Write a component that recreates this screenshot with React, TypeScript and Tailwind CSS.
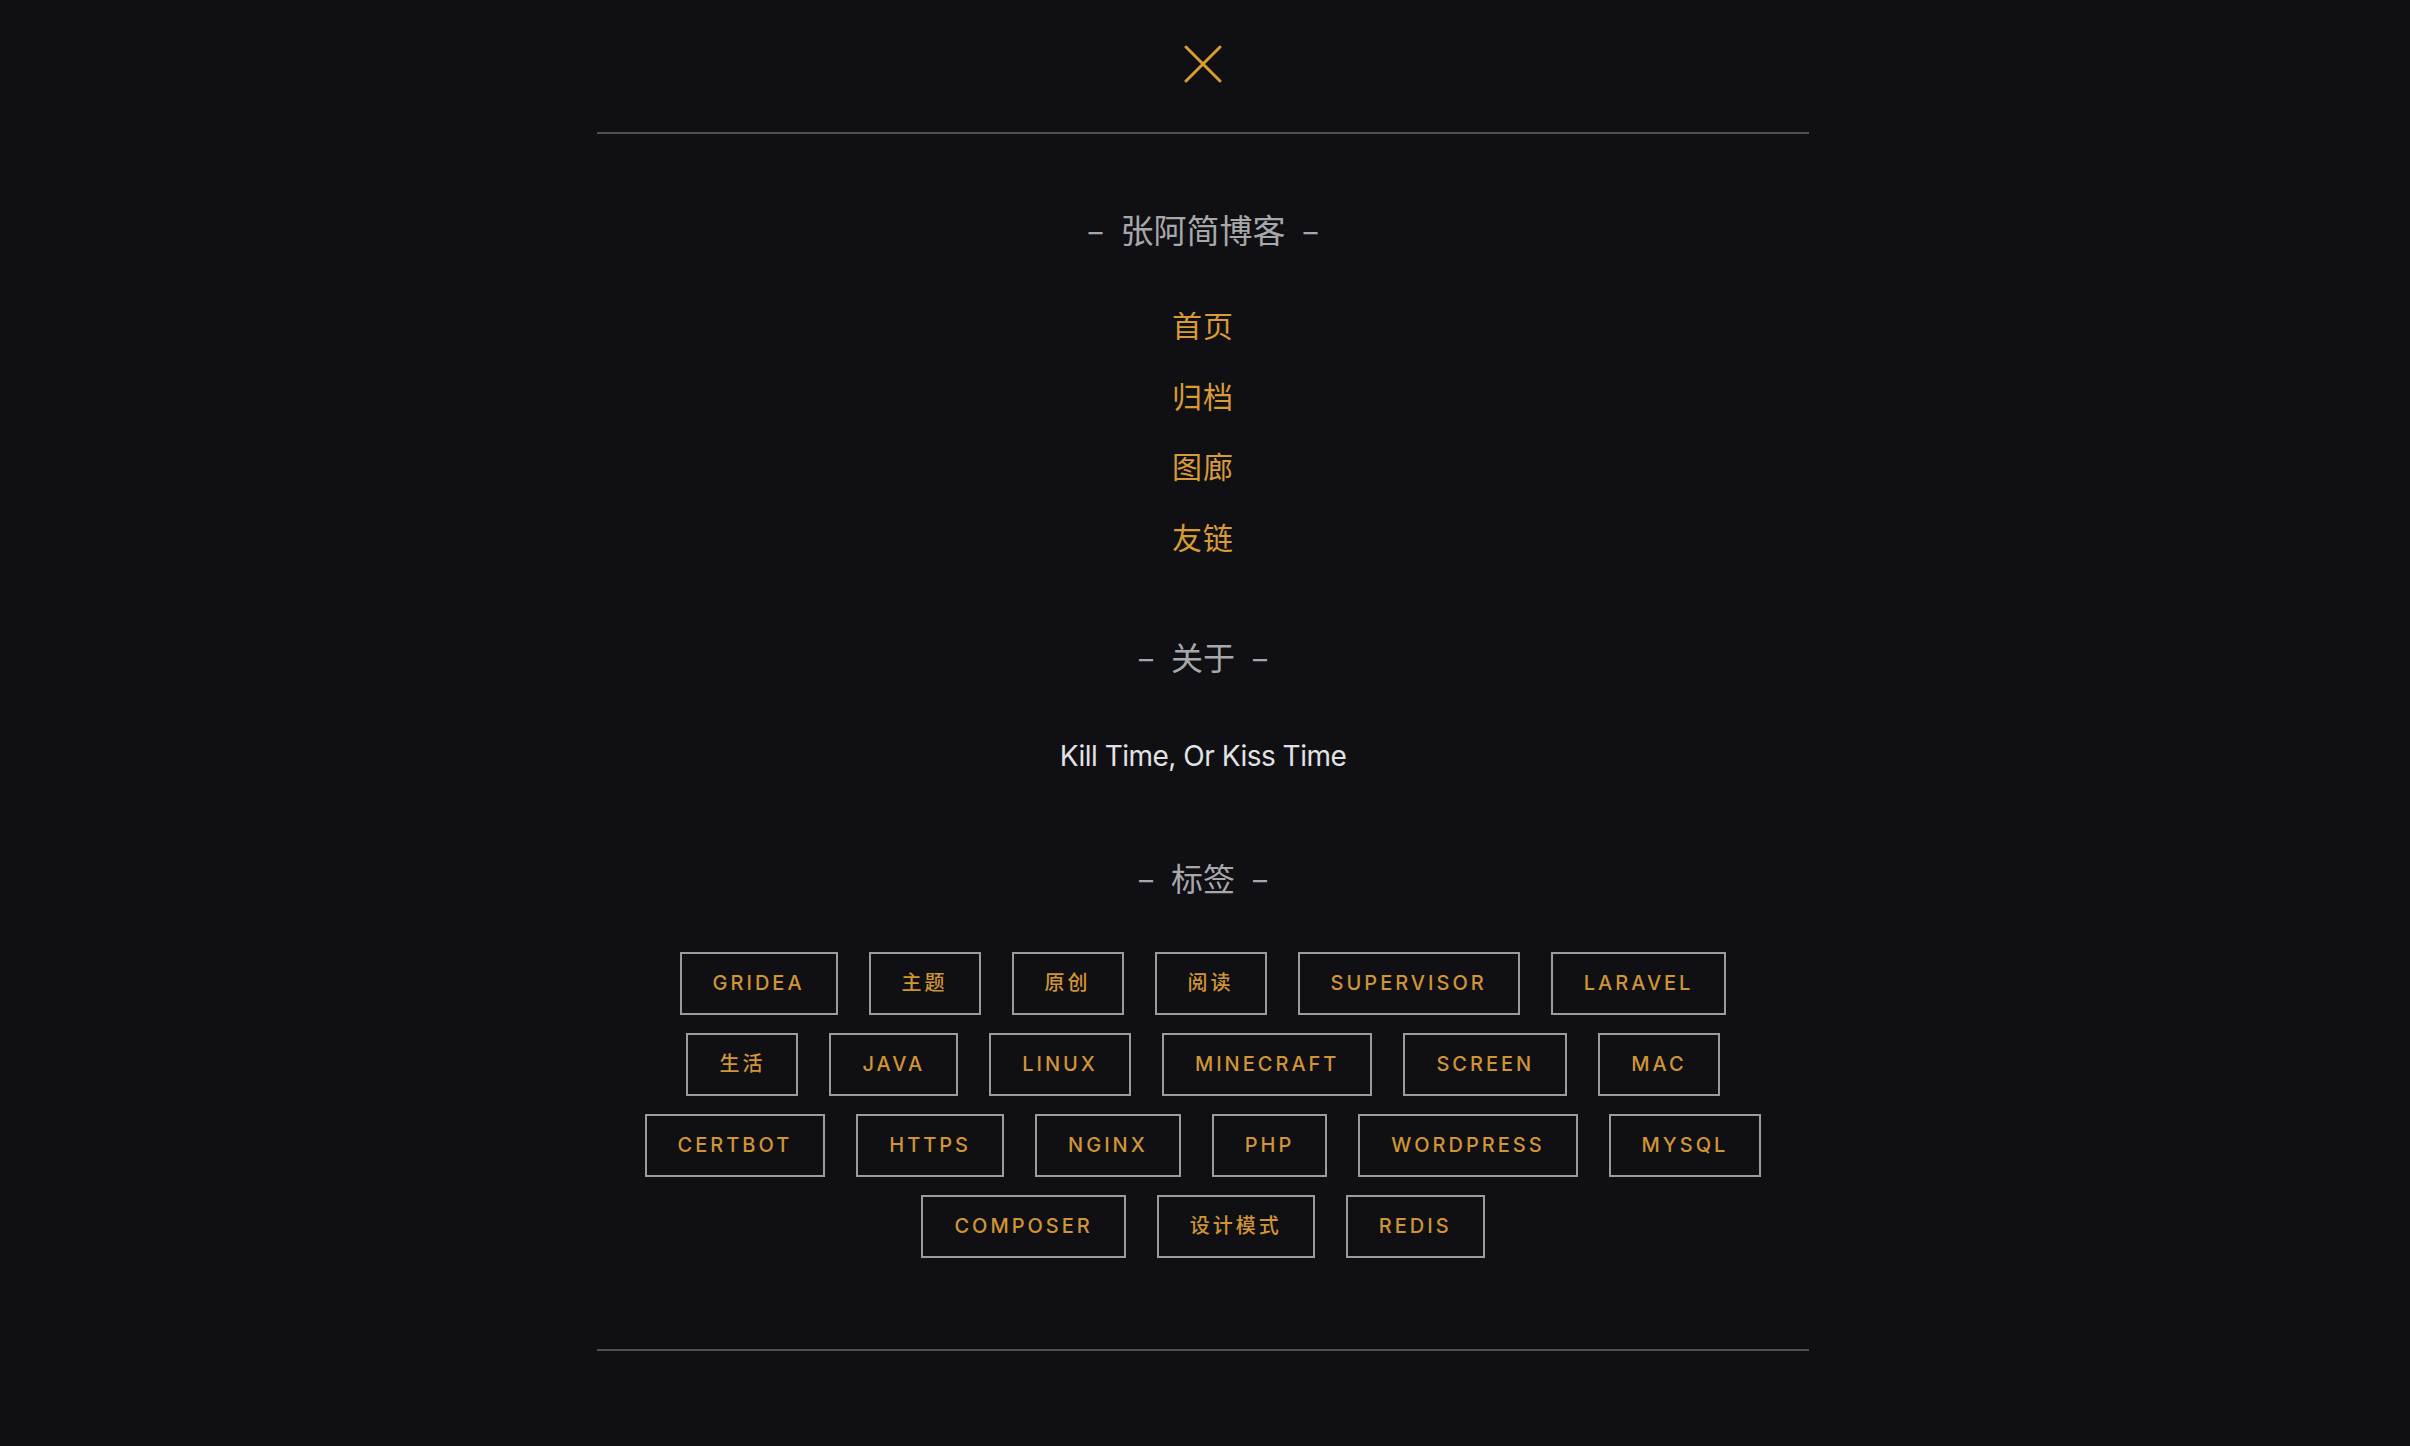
const menu = ["首页", "归档", "图廊", "友链"];

const tags = [
  "GRIDEA",
  "主题",
  "原创",
  "阅读",
  "SUPERVISOR",
  "LARAVEL",
  "生活",
  "JAVA",
  "LINUX",
  "MINECRAFT",
  "SCREEN",
  "MAC",
  "CERTBOT",
  "HTTPS",
  "NGINX",
  "PHP",
  "WORDPRESS",
  "MYSQL",
  "COMPOSER",
  "设计模式",
  "REDIS",
];

function SectionTitle({ text }: { text: string }) {
  return (
    <h2 className="flex h-[48px] items-center justify-center text-[32px] text-[#a8a8aa]">
      <span className="text-[28px]">–</span>
      <span className="mx-[18px]">{text}</span>
      <span className="text-[28px]">–</span>
    </h2>
  );
}

export default function App() {
  return (
    <main
      className="min-h-[1446px] bg-[#0f0f14] pr-[4px]"
      style={{ fontFamily: 'Inter, "Noto Sans CJK SC", sans-serif' }}
    >
      <div className="mx-auto w-[1212px]">
        <header className="flex h-[134px] justify-center border-b-2 border-[#4f4f54] pt-[45px]">
          {/* close icon */}
          <svg width="38" height="38" viewBox="0 0 38 38" fill="none">
            <path
              d="M2 2L36 36M36 2L2 36"
              stroke="#d89b36"
              strokeWidth="3"
              strokeLinecap="round"
            />
          </svg>
        </header>

        <section className="mt-[74px] flex flex-col items-center">
          <h1 className="flex h-[48px] items-center text-[33px] text-[#a8a8aa]">
            <span className="text-[28px]">–</span>
            <span className="mx-[18px]">张阿简博客</span>
            <span className="text-[28px]">–</span>
          </h1>

          <nav className="mt-[35px] flex flex-col items-center">
            {menu.map((item) => (
              <a
                key={item}
                href="#"
                className="flex h-[70.7px] items-center text-[30px] tracking-[1px] text-[#d89b36]"
              >
                {item}
              </a>
            ))}
          </nav>
        </section>

        <section className="mt-[61px]">
          <SectionTitle text="关于" />
          <p className="mt-[53px] flex h-[40px] items-center justify-center text-[28px] tracking-[-0.5px] text-[#e2e2e4]">
            Kill Time, Or Kiss Time
          </p>
        </section>

        <section className="mt-[80px]">
          <SectionTitle text="标签" />
          <div className="mx-auto mt-[48px] flex max-w-[1180px] flex-wrap justify-center gap-x-[31px] gap-y-[18px]">
            {tags.map((tag) => (
              <a
                key={tag}
                href="#"
                className="flex h-[63px] items-center border-2 border-[#9c9c9f] px-[31px] text-[20px] font-medium tracking-[3px] text-[#cf9536]"
              >
                {tag}
              </a>
            ))}
          </div>
        </section>

        <div className="mt-[91px] border-b-2 border-[#4f4f54]" />
      </div>
    </main>
  );
}
